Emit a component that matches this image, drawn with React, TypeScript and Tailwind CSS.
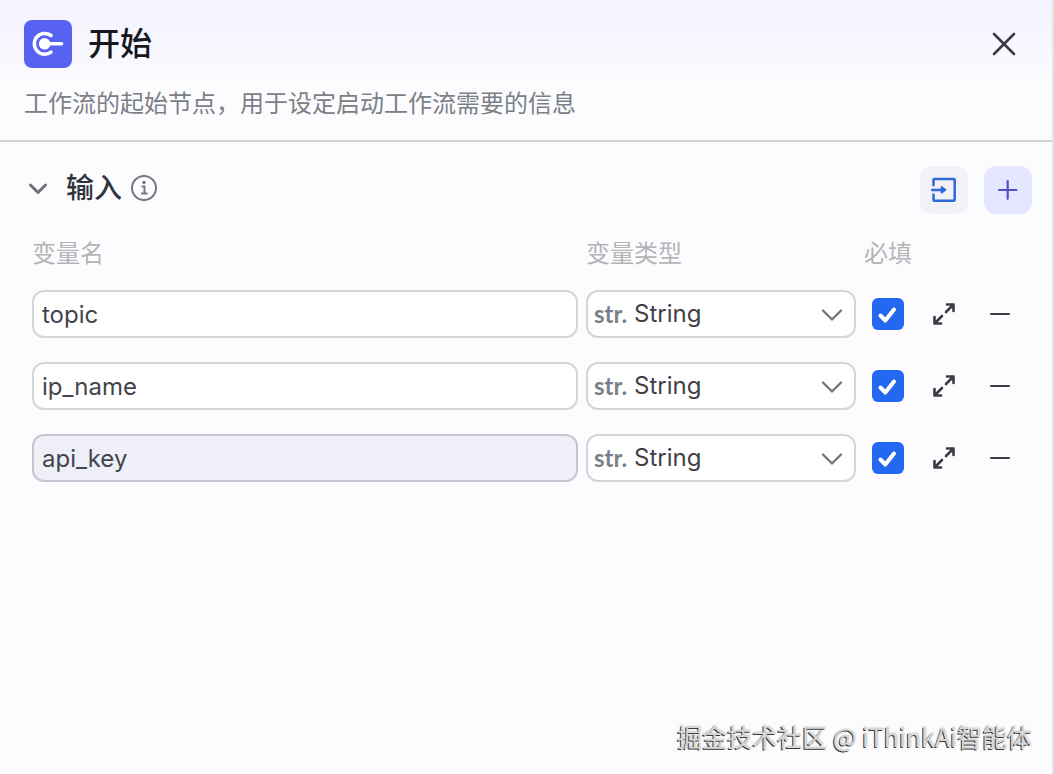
import React from 'react';

interface Variable {
  name: string;
  active?: boolean;
}

const variables: Variable[] = [
  { name: 'topic' },
  { name: 'ip_name' },
  { name: 'api_key', active: true },
];

const GRID = 'grid grid-cols-[minmax(0,1fr)_270px_48px_48px_48px] gap-x-2';

const StartIcon = () => (
  <svg className="h-12 w-12 shrink-0 rounded-lg bg-[#5762f0]" viewBox="0 0 48 48" fill="none" stroke="#fff" strokeLinecap="round">
    <path d="M27 15.5A10.4 10.4 0 1 0 27 32.1" strokeWidth="3.5" />
    <circle cx="20.6" cy="23.8" r="5.8" fill="#fff" stroke="none" />
    <path d="M22 23.8H37.6" strokeWidth="3.4" />
  </svg>
);

const ImportIcon = () => (
  <svg width="28" height="28" viewBox="0 0 28 28" fill="none" stroke="#2f66da" strokeWidth="2.5" strokeLinejoin="round" strokeLinecap="round">
    <path d="M3.5 9.2V4.1a1 1 0 0 1 1-1H23.7a1 1 0 0 1 1 1V23.7a1 1 0 0 1-1 1H4.5a1 1 0 0 1-1-1V18.5" />
    <path d="M2.2 13.9H13" />
    <path d="M11.500 10.900 15.600 13.900 11.500 16.900Z" fill="#2f66da" strokeWidth="1.600" />
  </svg>
);

const ExpandIcon = () => (
  <svg width="24" height="24" viewBox="0 0 24 24" fill="none" stroke="#3b3d44" strokeWidth="2.6" strokeLinecap="round" strokeLinejoin="round">
    <path d="M14 10 21.5 2.5M15 2.5h6.5v6.5" />
    <path d="M10 14 2.5 21.5M2.5 15v6.5h6.5" />
  </svg>
);

const VariableRow: React.FC<{ variable: Variable }> = ({ variable }) => (
  <div className={`${GRID} items-center`}>
    <input
      type="text"
      aria-label="变量名"
      defaultValue={variable.name}
      className={`h-12 w-full rounded-xl border-2 px-2 text-2xl text-[#42454d] outline-none ${
        variable.active ? 'border-[#c5c6d3] bg-[#efeff7]' : 'border-[#d3d5d9] bg-white'
      }`}
    />
    <div className="relative">
      <select
        aria-label="变量类型"
        className="block h-12 w-full appearance-none rounded-xl border-2 border-[#d3d5d9] bg-white pr-10 pl-[46px] text-2xl text-[#3f4148] outline-none"
      >
        <option>String</option>
      </select>
      <span className="pointer-events-none absolute inset-y-0 left-2 flex items-center font-['Lato',sans-serif] text-2xl font-bold text-[#7d7f88]">
        str.
      </span>
      <svg className="pointer-events-none absolute inset-y-0 right-3 my-auto" width="24" height="24" viewBox="0 0 24 24" fill="none" stroke="#76787f" strokeWidth="2.4" strokeLinecap="round" strokeLinejoin="round">
        <path d="M3 8.5 12 17.5 21 8.5" />
      </svg>
    </div>
    <label className="relative ml-2 block h-8 w-8">
      <input type="checkbox" aria-label="必填" defaultChecked className="peer block h-8 w-8 appearance-none rounded-md bg-[#d3d5d9] checked:bg-[#2468f2]" />
      <svg className="pointer-events-none absolute inset-0 hidden peer-checked:block" width="32" height="32" viewBox="0 0 32 32" fill="none" stroke="#fff" strokeWidth="4" strokeLinecap="round" strokeLinejoin="round">
        <path d="M8.5 17.5 13.3 22.5 22 11.5" />
      </svg>
    </label>
    <button type="button" aria-label="展开" className="flex h-12 items-center justify-center">
      <ExpandIcon />
    </button>
    <button type="button" aria-label="删除" className="flex h-12 items-center justify-center">
      <svg width="20" height="20" viewBox="0 0 20 20" stroke="#3b3d44" strokeWidth="2" strokeLinecap="round">
        <path d="M1 10H19" />
      </svg>
    </button>
  </div>
);

const App: React.FC = () => {
  return (
    <main className="flex min-h-screen flex-col border-r-2 border-[#e4e5e9] bg-[#fcfcff] font-['Inter','Noto_Sans_CJK_SC',sans-serif]">
      <header className="border-b-2 border-[#d0d2d5] pb-5">
        <div className="flex items-center gap-4 bg-linear-to-b from-[#f3f3ff] to-[#f9f9ff] px-6 pt-5 pb-1.5">
          <StartIcon />
          <h1 className="flex-1 text-[32px] leading-12 font-medium text-[#16181d]">开始</h1>
          <button type="button" aria-label="关闭" className="flex h-12 w-12 items-center justify-center">
            <svg width="24" height="24" viewBox="0 0 24 24" stroke="#3a3b42" strokeWidth="2.6" strokeLinecap="round">
              <path d="M2 2 22 22M22 2 2 22" />
            </svg>
          </button>
        </div>
        <p className="mt-3.5 px-6 text-2xl text-[#7b8085]">工作流的起始节点，用于设定启动工作流需要的信息</p>
      </header>

      <section className="pt-6 pr-5 pl-6">
        <div className="flex items-start gap-4">
          <div className="flex h-11 flex-1 items-center">
            <button type="button" aria-label="收起" className="flex h-11 w-7 items-center justify-center">
              <svg width="20" height="20" viewBox="0 0 20 20" fill="none" stroke="#6e7077" strokeWidth="3" strokeLinecap="round" strokeLinejoin="round">
                <path d="M2.5 7 10 14.5 17.5 7" />
              </svg>
            </button>
            <h2 className="ml-3.5 text-[28px] leading-10 font-medium text-[#31343c]">输入</h2>
            <svg className="ml-2" width="28" height="28" viewBox="0 0 28 28" fill="none" stroke="#76787f" strokeWidth="2">
              <circle cx="14" cy="14" r="12" />
              <path d="M11.5 12.5H14.5V19M11 19.5H17.5" />
              <circle cx="14" cy="8.5" r="1.7" fill="#76787f" stroke="none" />
            </svg>
          </div>
          <button type="button" aria-label="导入" className="flex h-12 w-12 items-center justify-center rounded-xl bg-[#f1f2f8]">
            <ImportIcon />
          </button>
          <button type="button" aria-label="新增" className="flex h-12 w-12 items-center justify-center rounded-xl bg-[#e5e6ff]">
            <svg width="20" height="20" viewBox="0 0 20 20" stroke="#5350d0" strokeWidth="2.2" strokeLinecap="round">
              <path d="M1 10H18.5M9.7 1.2V18.8" />
            </svg>
          </button>
        </div>

        <div className="mt-6 px-2">
          <div className={`${GRID} text-2xl text-[#b3b5b7]`}>
            <span>变量名</span>
            <span>变量类型</span>
            <span>必填</span>
          </div>
          <div className="mt-5 flex flex-col gap-6">
            {variables.map((variable) => (
              <VariableRow key={variable.name} variable={variable} />
            ))}
          </div>
        </div>
      </section>

      <footer className="mt-auto pr-5 pb-5 text-right font-['Noto_Sans_CJK_SC',sans-serif] text-[25px] leading-9 text-[#d8d8d8] [text-shadow:-1px_1px_0_#3a3a3a,0_0_2px_#aaa]">
        掘金技术社区 @ iThinkAi智能体
      </footer>
    </main>
  );
};

export default App;
